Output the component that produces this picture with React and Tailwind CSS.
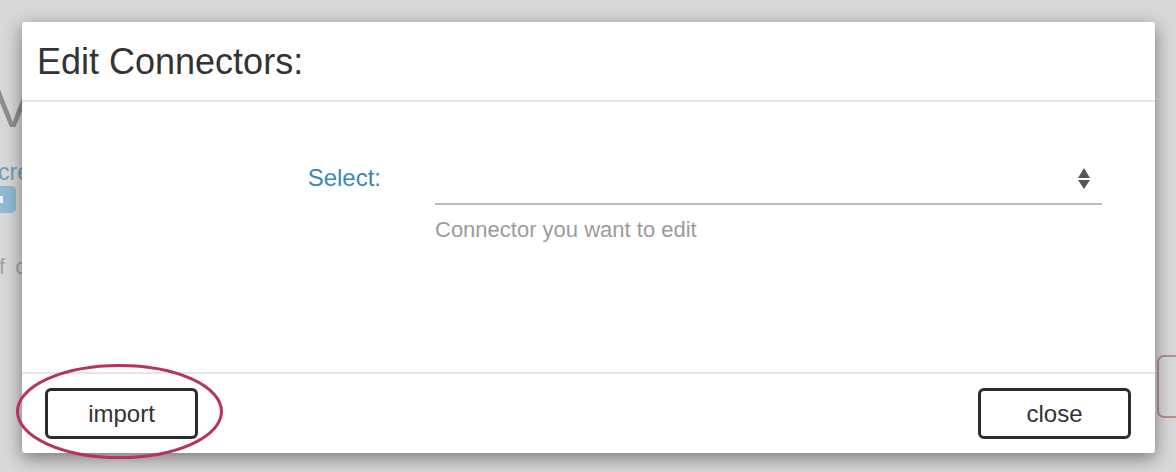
export default function App() {
  const font = { fontFamily: '"Liberation Sans", Arial, sans-serif' };
  return (
    <div className="relative w-[1176px] h-[472px] overflow-hidden bg-[#d8d8d8]" style={font}>
      {/* dimmed page behind the modal */}
      <div className="flex flex-col pt-[78px]">
        <div className="ml-[-6px] text-[56px] leading-[60px] font-light text-[#8e8e8e]">V</div>
        <div className="ml-[-2px] mt-[20px] text-[23px] leading-[28px] text-[#6d9fbe]">cre</div>
        <div className="mt-[0px] w-[16px] h-[27px] rounded-r-[5px] bg-[#8fbad2] flex items-center">
          <div className="w-[3px] h-[7px] bg-white/80"></div>
        </div>
        <div className="ml-[-1px] mt-[42px] text-[22px] leading-[24px] text-[#a4a4a4] tracking-[2px]">f c</div>
      </div>
      <div className="absolute left-[1157px] top-[355px] w-[60px] h-[63px] rounded-[7px] border-2 border-[#b88f8f]"></div>

      {/* modal */}
      <div className="absolute left-[22px] top-[22px] w-[1133px] h-[431px] bg-white rounded-[3px] shadow-[0_5px_18px_rgba(0,0,0,0.45)] flex flex-col">
        <div className="h-[80px] shrink-0 border-b-2 border-[#e5e5e5] flex items-center pl-[15px] pt-[1px]">
          <h4 className="text-[36px] text-[#333]">Edit Connectors:</h4>
        </div>
        <div className="flex-1 pt-[56px]">
          <div className="flex items-start">
            <label className="w-[359px] text-right text-[24px] leading-[40px] text-[#3a87b8]">Select:</label>
            <div className="ml-[54px] w-[667px] flex flex-col">
              <div className="h-[47px] border-b-2 border-[#bcbcbc] flex items-start justify-end pr-[12px] pt-[10px]">
                <svg width="12" height="22" viewBox="0 0 12 22">
                  <polygon points="6,0 12,10 0,10" fill="#555" />
                  <polygon points="0,12 12,12 6,21" fill="#555" />
                </svg>
              </div>
              <div className="mt-[11px] text-[22px] leading-[27px] text-[#9b9b9b]">Connector you want to edit</div>
            </div>
          </div>
        </div>
        <div className="h-[81px] shrink-0 border-t-2 border-[#e5e5e5] flex items-center justify-between pl-[23px] pr-[24px]">
          <button className="w-[153px] h-[51px] border-[3px] border-[#2b2b30] rounded-[6px] bg-white text-[24px] text-[#333]">import</button>
          <button className="w-[153px] h-[51px] border-[3px] border-[#2b2b30] rounded-[6px] bg-white text-[24px] text-[#333]">close</button>
        </div>
      </div>

      {/* annotation ellipse */}
      <svg className="absolute left-[15px] top-[363px]" width="210" height="98" viewBox="0 0 210 98">
        <ellipse cx="104.5" cy="48.5" rx="102" ry="46" fill="none" stroke="#b8325e" strokeWidth="3" />
      </svg>
    </div>
  );
}
